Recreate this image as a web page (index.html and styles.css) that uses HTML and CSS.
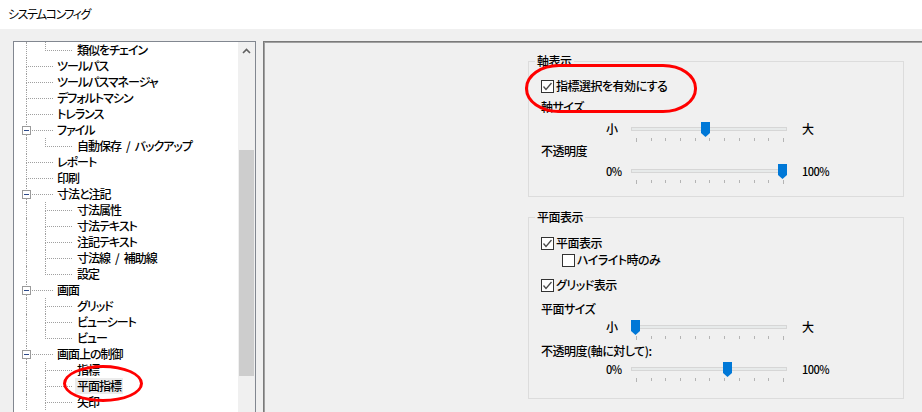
FILE: index.html
```html
<!DOCTYPE html>
<html lang="ja">
<head>
<meta charset="utf-8">
<title>システムコンフィグ</title>
<link rel="stylesheet" href="styles.css">
</head>
<body>
<div class="titlebar">システムコンフィグ</div>

<div class="main">
  <div class="tree">
    <div class="rows">
      <div class="row lv2 last"><span class="ind"></span><span class="v"></span><span class="conn"><i class="t"></i><i class="b"></i></span><span class="lbl">類似をチェイン</span></div>
      <div class="row lv1"><span class="ind"></span><span class="conn"><i class="t"></i><i class="b"></i></span><span class="lbl">ツールパス</span></div>
      <div class="row lv1"><span class="ind"></span><span class="conn"><i class="t"></i><i class="b"></i></span><span class="lbl">ツールパスマネージャ</span></div>
      <div class="row lv1"><span class="ind"></span><span class="conn"><i class="t"></i><i class="b"></i></span><span class="lbl">デフォルトマシン</span></div>
      <div class="row lv1"><span class="ind"></span><span class="conn"><i class="t"></i><i class="b"></i></span><span class="lbl">トレランス</span></div>
      <div class="row lv1"><span class="ind"></span><span class="conn"><i class="t"></i><i class="b"></i><b class="exp"></b></span><span class="lbl">ファイル</span></div>
      <div class="row lv2 last"><span class="ind"></span><span class="v"></span><span class="conn"><i class="t"></i><i class="b"></i></span><span class="lbl">自動保存<span class="sep">/</span>バックアップ</span></div>
      <div class="row lv1"><span class="ind"></span><span class="conn"><i class="t"></i><i class="b"></i></span><span class="lbl">レポート</span></div>
      <div class="row lv1"><span class="ind"></span><span class="conn"><i class="t"></i><i class="b"></i></span><span class="lbl">印刷</span></div>
      <div class="row lv1"><span class="ind"></span><span class="conn"><i class="t"></i><i class="b"></i><b class="exp"></b></span><span class="lbl">寸法と注記</span></div>
      <div class="row lv2"><span class="ind"></span><span class="v"></span><span class="conn"><i class="t"></i><i class="b"></i></span><span class="lbl">寸法属性</span></div>
      <div class="row lv2"><span class="ind"></span><span class="v"></span><span class="conn"><i class="t"></i><i class="b"></i></span><span class="lbl">寸法テキスト</span></div>
      <div class="row lv2"><span class="ind"></span><span class="v"></span><span class="conn"><i class="t"></i><i class="b"></i></span><span class="lbl">注記テキスト</span></div>
      <div class="row lv2"><span class="ind"></span><span class="v"></span><span class="conn"><i class="t"></i><i class="b"></i></span><span class="lbl">寸法線<span class="sep">/</span>補助線</span></div>
      <div class="row lv2 last"><span class="ind"></span><span class="v"></span><span class="conn"><i class="t"></i><i class="b"></i></span><span class="lbl">設定</span></div>
      <div class="row lv1"><span class="ind"></span><span class="conn"><i class="t"></i><i class="b"></i><b class="exp"></b></span><span class="lbl">画面</span></div>
      <div class="row lv2"><span class="ind"></span><span class="v"></span><span class="conn"><i class="t"></i><i class="b"></i></span><span class="lbl">グリッド</span></div>
      <div class="row lv2"><span class="ind"></span><span class="v"></span><span class="conn"><i class="t"></i><i class="b"></i></span><span class="lbl">ビューシート</span></div>
      <div class="row lv2 last"><span class="ind"></span><span class="v"></span><span class="conn"><i class="t"></i><i class="b"></i></span><span class="lbl">ビュー</span></div>
      <div class="row lv1"><span class="ind"></span><span class="conn"><i class="t"></i><i class="b"></i><b class="exp"></b></span><span class="lbl">画面上の制御</span></div>
      <div class="row lv2"><span class="ind"></span><span class="v"></span><span class="conn"><i class="t"></i><i class="b"></i></span><span class="lbl">指標</span></div>
      <div class="row lv2"><span class="ind"></span><span class="v"></span><span class="conn"><i class="t"></i><i class="b"></i></span><span class="lbl sel">平面指標</span></div>
      <div class="row lv2"><span class="ind"></span><span class="v"></span><span class="conn"><i class="t"></i><i class="b"></i></span><span class="lbl">矢印</span></div>
    </div>
    <div class="vscroll">
      <div class="sbtn">
        <svg width="9" height="6" viewBox="0 0 9 6"><polyline points="1,5 4.5,1.5 8,5" fill="none" stroke="#606060" stroke-width="1.6"/></svg>
      </div>
      <div class="thumb"></div>
    </div>
  </div>

  <div class="panel">
    <fieldset class="group g1">
      <legend>軸表示</legend>
      <div class="opt mt9"><span class="cb on"><svg width="11" height="11" viewBox="0 0 11 11"><polyline points="1.5,5.5 4,8.5 9.5,2" fill="none" stroke="#4a4a4a" stroke-width="1.3"/></svg></span>指標選択を有効にする</div>
      <div class="cap mt5">軸サイズ</div>
      <div class="slider mt6">
        <div class="sl-row"><span class="sl-min">小</span><span class="track-wrap"><span class="track"></span><svg class="thumb-k" style="left:70px" width="9" height="15" viewBox="0 0 9 15"><polygon points="0,0 9,0 9,11 4.5,15 0,11" fill="#0078d7"/></svg></span><span class="sl-max">大</span></div>
        <div class="ticks"><i></i><i></i><i></i><i></i><i></i><i></i><i></i><i></i><i></i><i></i><i></i></div>
      </div>
      <div class="cap">不透明度</div>
      <div class="slider mt4">
        <div class="sl-row"><span class="sl-min num">0%</span><span class="track-wrap"><span class="track"></span><svg class="thumb-k" style="left:147px" width="9" height="15" viewBox="0 0 9 15"><polygon points="0,0 9,0 9,11 4.5,15 0,11" fill="#0078d7"/></svg></span><span class="sl-max num">100%</span></div>
        <div class="ticks"><i></i><i></i><i></i><i></i><i></i><i></i><i></i><i></i><i></i><i></i><i></i></div>
      </div>
    </fieldset>

    <fieldset class="group g2">
      <legend>平面表示</legend>
      <div class="opt mt10"><span class="cb on"><svg width="11" height="11" viewBox="0 0 11 11"><polyline points="1.5,5.5 4,8.5 9.5,2" fill="none" stroke="#4a4a4a" stroke-width="1.3"/></svg></span>平面表示</div>
      <div class="opt sub mt1"><span class="cb"></span>ハイライト時のみ</div>
      <div class="opt mt9"><span class="cb on"><svg width="11" height="11" viewBox="0 0 11 11"><polyline points="1.5,5.5 4,8.5 9.5,2" fill="none" stroke="#4a4a4a" stroke-width="1.3"/></svg></span>グリッド表示</div>
      <div class="cap mt8">平面サイズ</div>
      <div class="slider mt2">
        <div class="sl-row"><span class="sl-min">小</span><span class="track-wrap"><span class="track"></span><svg class="thumb-k" style="left:0px" width="9" height="15" viewBox="0 0 9 15"><polygon points="0,0 9,0 9,11 4.5,15 0,11" fill="#0078d7"/></svg></span><span class="sl-max">大</span></div>
        <div class="ticks"><i></i><i></i><i></i><i></i><i></i><i></i><i></i><i></i><i></i><i></i><i></i></div>
      </div>
      <div class="cap mt2">不透明度(軸に対して):</div>
      <div class="slider mt2">
        <div class="sl-row"><span class="sl-min num">0%</span><span class="track-wrap"><span class="track"></span><svg class="thumb-k" style="left:92px" width="9" height="15" viewBox="0 0 9 15"><polygon points="0,0 9,0 9,11 4.5,15 0,11" fill="#0078d7"/></svg></span><span class="sl-max num">100%</span></div>
        <div class="ticks"><i></i><i></i><i></i><i></i><i></i><i></i><i></i><i></i><i></i><i></i><i></i></div>
      </div>
    </fieldset>
  </div>
</div>

<div class="mark mark-opt"></div>
<div class="mark mark-tree"></div>
</body>
</html>
```

FILE: styles.css
```css
body {
   margin:0;
   height:412px;
   overflow:hidden;
   position:relative;
   background-color:#f0f0f0;
   color:#000;
   font-family:"Noto Sans CJK JP","Noto Sans",sans-serif;
   font-size:12px;
   font-weight:500;
   font-feature-settings:"palt";
}
.titlebar {
   height:29px;
   line-height:28px;
   padding-left:8px;
   letter-spacing:-1.5px;
   font-weight:400;
   background:#fff;
}
.main {
   display:flex;
   gap:7px;
   padding:12px 0 0 13px;
}

/* tree */
.tree {
   display:flex;
   flex-shrink:0;
   width:243px;
   height:400px;
   box-sizing:border-box;
   border:1px solid #828790;
   background:#fff;
}
.rows {
   flex:1;
}
.row {
   display:flex;
   height:16px;
   line-height:16px;
   white-space:nowrap;
}
.ind {
   width:12px;
}
.v {
   width:19px;
   border-left:1px dotted #a0a0a0;
   box-sizing:border-box;
}
.conn {
   position:relative;
   display:flex;
   flex-direction:column;
   width:27px;
}
.conn i {
   display:block;
   border-left:1px dotted #a0a0a0;
}
.conn .t {
   height:8px;
   border-bottom:1px dotted #a0a0a0;
}
.conn .b {
   flex:1;
}
.last .conn .b {
   border-left-color:transparent;
}
.exp {
   position:absolute;
   left:-4px;
   top:4px;
   width:9px;
   height:9px;
   box-sizing:border-box;
   border:1px solid #9a9a9a;
   background:#fff;
}
.exp::after {
   content:"";
   position:absolute;
   left:1px;
   top:3px;
   width:5px;
   height:1px;
   background:#2d4a8a;
}
.lbl {
   margin-left:2px;
   padding:0 2px;
   letter-spacing:-1px;
}
.lbl .sep {
   margin:0 5px;
}
.lv2 .lbl {
   margin-left:3px;
}
.lbl.sel {
   background:#ececec;
}
.vscroll {
   width:17px;
   background:#f0f0f0;
}
.sbtn {
   height:17px;
   display:flex;
   align-items:center;
   justify-content:center;
}
.thumb {
   margin:91px 1px 0;
   height:226px;
   background:#cdcdcd;
}

/* right panel */
.panel {
   flex-shrink:0;
   width:700px;
   height:400px;
   border:1px solid #7a7a7a;
   box-shadow:inset 1px 1px #a0a0a0;
}
.group {
   width:376px;
   box-sizing:border-box;
   margin:0 0 0 264px;
   padding:0 0 11px 12px;
   border:1px solid #dcdcdc;
   letter-spacing:-0.5px;
}
.g1 {
   margin-top:11px;
}
.g2 {
   margin-top:12px;
   padding-bottom:15px;
}
legend {
   margin-left:-6px;
   padding:0 2px;
   line-height:16px;
}
.opt {
   display:flex;
   align-items:center;
   height:16px;
   line-height:16px;
}
.opt.sub {
   padding-left:21px;
}
.cb {
   display:inline-flex;
   align-items:center;
   justify-content:center;
   width:13px;
   height:13px;
   box-sizing:border-box;
   border:1px solid #333;
   background:#fff;
   margin-right:2px;
}
.cap {
   height:16px;
   line-height:16px;
}
.slider {
   padding-left:65px;
}
.sl-row {
   display:flex;
   height:16px;
   line-height:16px;
}
.sl-min {
   width:25px;
}
.sl-max {
   margin-left:15px;
}
.num {
   font-size:11px;
}
.track-wrap {
   position:relative;
   width:156px;
   height:16px;
}
.track {
   display:block;
   margin-top:6px;
   height:4px;
   box-sizing:border-box;
   border:1px solid #d6d6d6;
   background:#e7eaea;
}
.thumb-k {
   position:absolute;
   top:1px;
}
.ticks {
   display:flex;
   justify-content:space-between;
   align-items:flex-start;
   width:148px;
   height:5px;
   margin:1px 0 0 30px;
}
.ticks i {
   width:1px;
   height:3px;
   background:#b4b4b4;
}
.ticks i:first-child, .ticks i:last-child {
   height:4px;
}

.mt1 { margin-top:1px; }
.mt2 { margin-top:2px; }
.mt4 { margin-top:4px; }
.mt5 { margin-top:5px; }
.mt6 { margin-top:6px; }
.mt8 { margin-top:8px; }
.mt9 { margin-top:9px; }
.mt10 { margin-top:10px; }

/* red annotation marks */
.mark {
   position:absolute;
   box-sizing:border-box;
   border:3px solid #f00;
}
.mark-opt {
   left:525px;
   top:64px;
   width:172px;
   height:49px;
   border-radius:34px / 24px;
}
.mark-tree {
   left:63px;
   top:365px;
   width:80px;
   height:37px;
   border-radius:50%;
}
```
